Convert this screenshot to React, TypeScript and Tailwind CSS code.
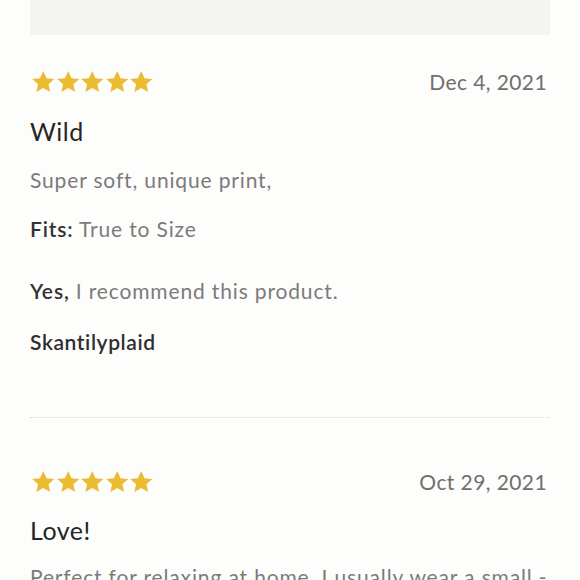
import React from "react";

const Star = () => (
  <svg width="24.5" height="24" viewBox="0 0 24 24" className="block">
    <path d="M12 1l3.3 7.2 7.8.8-5.9 5.3 1.7 7.7L12 18.1l-6.9 3.9 1.7-7.7L.9 9l7.8-.8z" fill="#ecbb34" />
  </svg>
);

const Stars = () => (
  <div className="flex">
    {[0, 1, 2, 3, 4].map((i) => (
      <Star key={i} />
    ))}
  </div>
);

export default function App() {
  return (
    <div
      className="w-[580px] h-[580px] overflow-hidden bg-[#fdfdfb] px-[30px]"
      style={{ fontFamily: "Lato, 'Noto Sans', sans-serif" }}
    >
      <div className="h-[35px] bg-[#f4f4f2]" />
      <div className="mt-[35px] flex items-center justify-between h-[24px] ml-[1px]">
        <Stars />
        <span className="text-[21px] text-[#6f6f6f] tracking-[0.4px] pr-[3px]">Dec 4, 2021</span>
      </div>
      <div className="mt-[22px] text-[25px] leading-[30px] text-[#262626] tracking-[0.5px]">Wild</div>
      <div className="mt-[20px] text-[21px] leading-[28px] text-[#7b7b7b] tracking-[0.85px]">Super soft, unique print,</div>
      <div className="mt-[21px] text-[21px] leading-[28px] text-[#7b7b7b] tracking-[0.85px]">
        <span className="font-semibold text-[#333]">Fits:</span> True to Size
      </div>
      <div className="mt-[34px] text-[21px] leading-[28px] text-[#7b7b7b] tracking-[0.85px]">
        <span className="font-semibold text-[#333]">Yes,</span> I recommend this product.
      </div>
      <div className="mt-[23px] text-[21px] leading-[28px] font-semibold text-[#2e2e2e] tracking-[0.6px]">Skantilyplaid</div>
      <div className="mt-[61px] border-t border-dotted border-[#d8d8d6]" />
      <div className="mt-[52px] flex items-center justify-between h-[24px] ml-[1px]">
        <Stars />
        <span className="text-[21px] text-[#6f6f6f] tracking-[0.4px] pr-[3px]">Oct 29, 2021</span>
      </div>
      <div className="mt-[21px] text-[25px] leading-[30px] text-[#262626] tracking-[0.5px]">Love!</div>
      <div className="mt-[18px] text-[21px] leading-[28px] text-[#7b7b7b] tracking-[0.85px] whitespace-nowrap">
        Perfect for relaxing at home. I usually wear a small -
      </div>
    </div>
  );
}
